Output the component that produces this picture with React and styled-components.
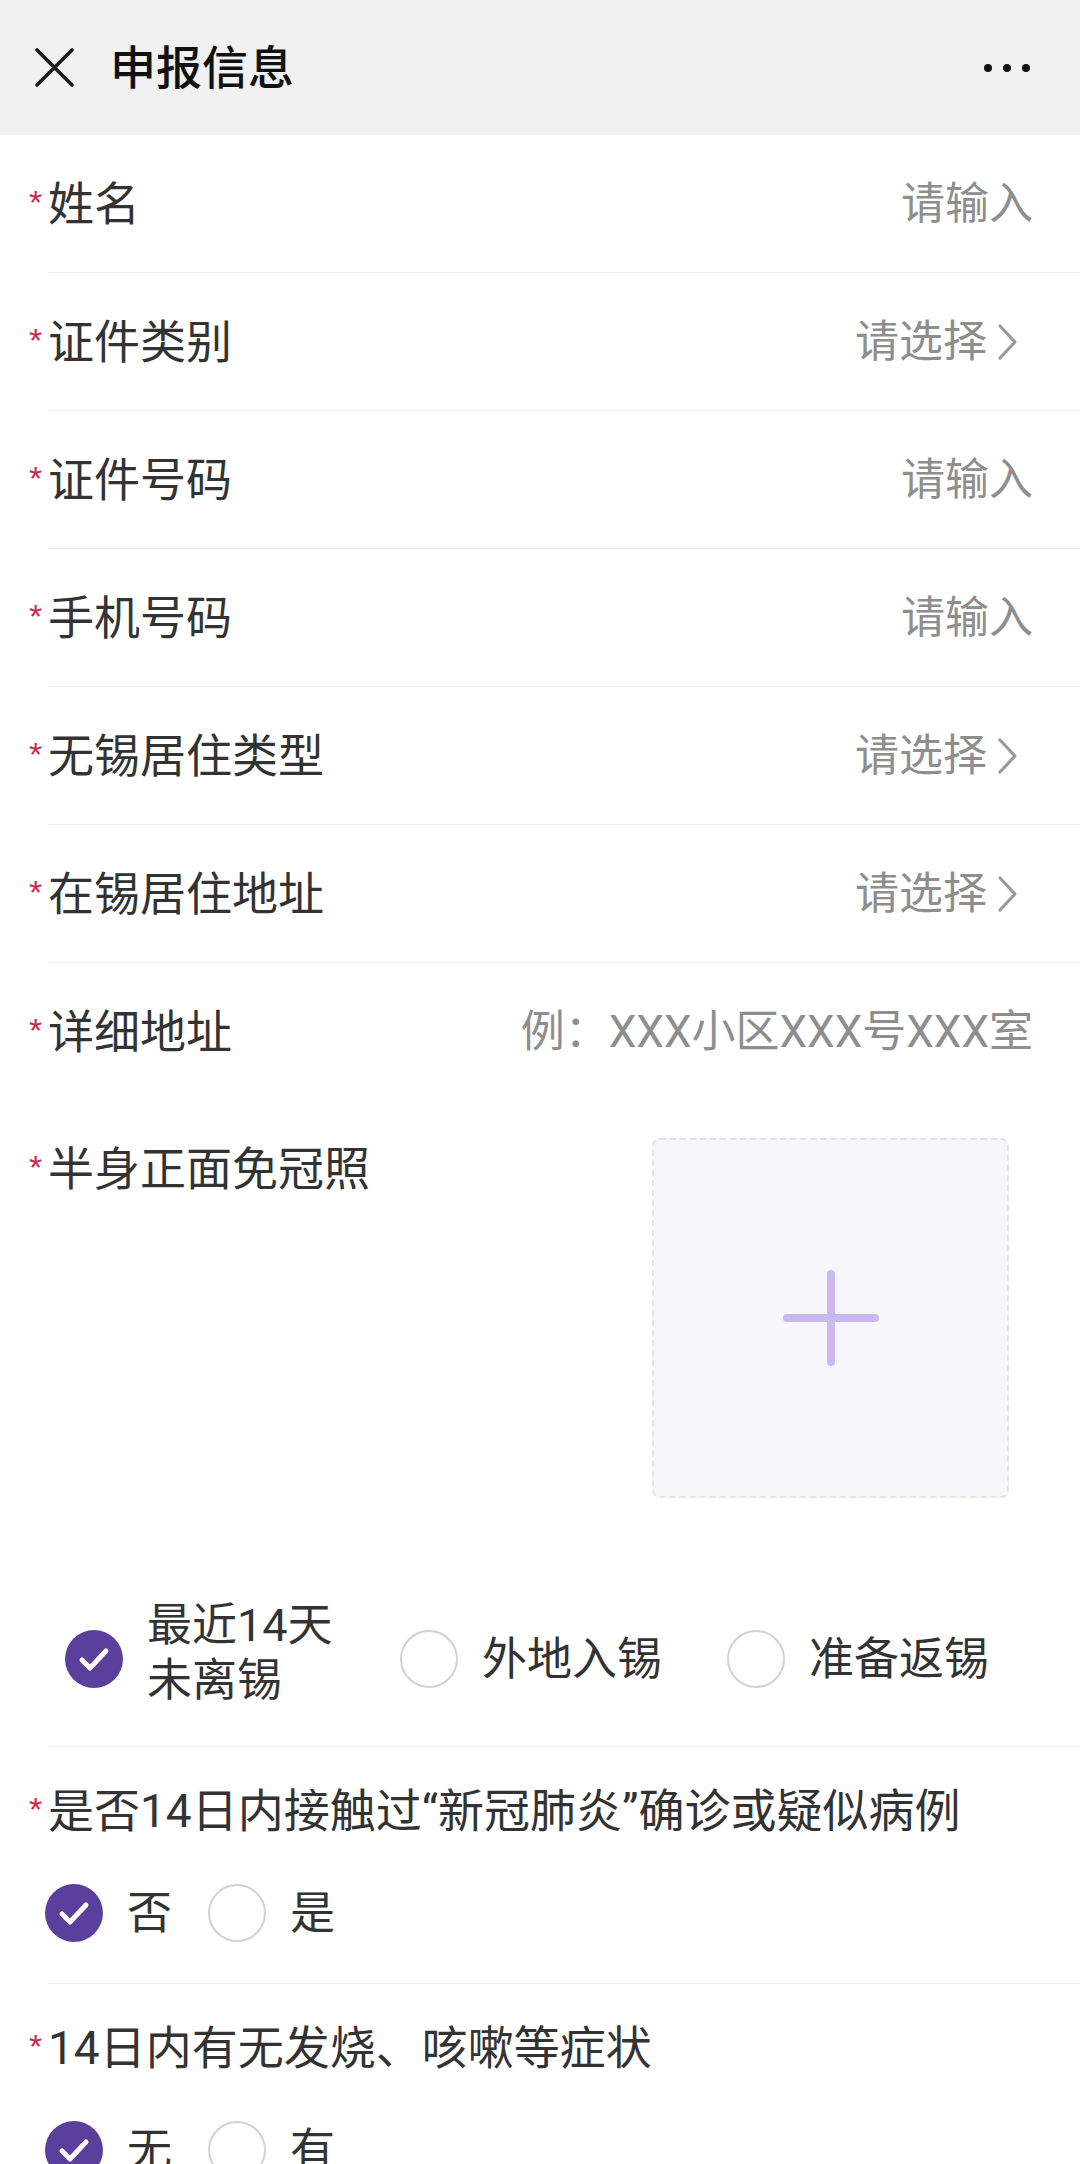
import React from "react";
import styled, { createGlobalStyle } from "styled-components";

const GlobalStyle = createGlobalStyle`
  html, body {
    margin: 0;
    padding: 0;
    background: #ffffff;
  }
  body {
    font-family: Roboto, "Noto Sans CJK SC", "Noto Sans", sans-serif;
    color: #333333;
  }
  * { box-sizing: border-box; }
`;

const Page = styled.div`
  width: 1080px;
  min-height: 2164px;
  background: #ffffff;
  overflow: hidden;
`;

const Header = styled.header`
  height: 135px;
  background: #f1f1f1;
  display: flex;
  align-items: center;
  padding: 0 50px 0 34px;
`;

const CloseButton = styled.div`
  width: 41px;
  height: 41px;
  display: flex;
  align-items: center;
  justify-content: center;
`;

const Title = styled.h1`
  margin: 0 0 0 35px;
  font-size: 46px;
  font-weight: 500;
  color: #111111;
  line-height: 1;
  flex: 1;
`;

const MoreDots = styled.div`
  display: flex;
  gap: 11px;
  align-items: center;
`;

const Dot = styled.span`
  width: 8px;
  height: 8px;
  border-radius: 50%;
  background: #111111;
`;

const Form = styled.main`
  display: flex;
  flex-direction: column;
`;

const Row = styled.div`
  margin-left: 48px;
  height: 138px;
  border-bottom: ${(p) => (p.$noBorder ? "none" : "1px solid #ececec")};
  display: flex;
  align-items: center;
  justify-content: space-between;
  padding-right: 47px;
`;

const Label = styled.div`
  display: flex;
  align-items: flex-start;
  font-size: 46px;
  line-height: 62px;
  color: #333333;
  white-space: nowrap;
`;

const Star = styled.span`
  width: 25px;
  margin-left: -25px;
  font-family: "Liberation Sans", sans-serif;
  font-size: 34px;
  line-height: 58px;
  color: #cf2a4d;
  text-align: center;
`;

const Value = styled.div`
  display: flex;
  align-items: center;
  font-size: 44px;
  line-height: 62px;
  color: #8e8e8e;
  white-space: nowrap;
`;

const ChevronIcon = styled.svg`
  margin-left: 8px;
  margin-right: 13px;
`;

const PhotoRow = styled.div`
  margin-left: 48px;
  padding: 37px 71px 0 0;
  display: flex;
  justify-content: space-between;
  align-items: flex-start;
`;

const UploadBox = styled.div`
  width: 357px;
  height: 360px;
  background: #f7f6fb;
  border: 2px dashed #e3e3ea;
  border-radius: 8px;
  display: flex;
  align-items: center;
  justify-content: center;
`;

const StatusGroup = styled.div`
  margin-left: 48px;
  padding: 100px 0 26px 17px;
  border-bottom: 1px solid #ececec;
  display: grid;
  grid-template-columns: 335px 327px 1fr;
  align-items: center;
`;

const Option = styled.div`
  display: flex;
  align-items: center;
  gap: 24px;
`;

const OptionText = styled.span`
  font-size: 45px;
  line-height: 55px;
  color: #333333;
  margin-bottom: ${(p) => (p.$lift ? "12px" : "0")};
`;

const Circle = styled.span`
  flex: 0 0 auto;
  width: 58px;
  height: 58px;
  border-radius: 50%;
  display: flex;
  align-items: center;
  justify-content: center;
  background: ${(p) => (p.$checked ? "#5b3f9c" : "#ffffff")};
  border: ${(p) => (p.$checked ? "none" : "2.5px solid #d2d2d2")};
`;

const Question = styled.section`
  margin-left: 48px;
  padding: 33px 0 41px 0;
  border-bottom: ${(p) => (p.$noBorder ? "none" : "1px solid #ececec")};
`;

const QuestionOptions = styled.div`
  margin-top: 42px;
  margin-left: -3px;
  display: flex;
  align-items: center;
  gap: 36px;
`;

const Chevron = () => (
  <ChevronIcon width="25" height="38" viewBox="0 0 25 38">
    <polyline
      points="5,3 20,19 5,35"
      fill="none"
      stroke="#9a9a9a"
      strokeWidth="3.2"
      strokeLinecap="round"
      strokeLinejoin="round"
    />
  </ChevronIcon>
);

const Radio = ({ checked }) => (
  <Circle $checked={checked}>
    {checked && (
      <svg width="58" height="58" viewBox="0 0 58 58">
        <polyline
          points="17,30 25,38 41,21"
          fill="none"
          stroke="#ffffff"
          strokeWidth="5"
          strokeLinecap="round"
          strokeLinejoin="round"
        />
      </svg>
    )}
  </Circle>
);

const fields = [
  { label: "姓名", value: "请输入" },
  { label: "证件类别", value: "请选择", select: true },
  { label: "证件号码", value: "请输入" },
  { label: "手机号码", value: "请输入" },
  { label: "无锡居住类型", value: "请选择", select: true },
  { label: "在锡居住地址", value: "请选择", select: true },
  { label: "详细地址", value: "例：XXX小区XXX号XXX室", noBorder: true },
];

const questions = [
  {
    label: "是否14日内接触过“新冠肺炎”确诊或疑似病例",
    options: [
      { text: "否", checked: true },
      { text: "是", checked: false },
    ],
  },
  {
    label: "14日内有无发烧、咳嗽等症状",
    options: [
      { text: "无", checked: true },
      { text: "有", checked: false },
    ],
  },
];

export default function App() {
  return (
    <Page>
      <GlobalStyle />
      <Header>
        <CloseButton>
          <svg width="41" height="41" viewBox="0 0 41 41">
            <path
              d="M3 3 L38 38 M38 3 L3 38"
              stroke="#1a1a1a"
              strokeWidth="3.6"
              strokeLinecap="round"
            />
          </svg>
        </CloseButton>
        <Title>申报信息</Title>
        <MoreDots>
          <Dot />
          <Dot />
          <Dot />
        </MoreDots>
      </Header>
      <Form>
        {fields.map((f) => (
          <Row key={f.label} $noBorder={f.noBorder}>
            <Label>
              <Star>*</Star>
              {f.label}
            </Label>
            <Value>
              {f.value}
              {f.select && <Chevron />}
            </Value>
          </Row>
        ))}
        <PhotoRow>
          <Label>
            <Star>*</Star>
            半身正面免冠照
          </Label>
          <UploadBox>
            <svg width="96" height="96" viewBox="0 0 96 96">
              <path
                d="M48 4 V92 M4 48 H92"
                stroke="#c8baef"
                strokeWidth="8"
                strokeLinecap="round"
              />
            </svg>
          </UploadBox>
        </PhotoRow>
        <StatusGroup>
          <Option>
            <Radio checked />
            <OptionText $lift>
              最近14天
              <br />
              未离锡
            </OptionText>
          </Option>
          <Option>
            <Radio />
            <OptionText>外地入锡</OptionText>
          </Option>
          <Option>
            <Radio />
            <OptionText>准备返锡</OptionText>
          </Option>
        </StatusGroup>
        {questions.map((q, i) => (
          <Question key={q.label} $noBorder={i === questions.length - 1}>
            <Label>
              <Star>*</Star>
              {q.label}
            </Label>
            <QuestionOptions>
              {q.options.map((o) => (
                <Option key={o.text}>
                  <Radio checked={o.checked} />
                  <OptionText>{o.text}</OptionText>
                </Option>
              ))}
            </QuestionOptions>
          </Question>
        ))}
      </Form>
    </Page>
  );
}
